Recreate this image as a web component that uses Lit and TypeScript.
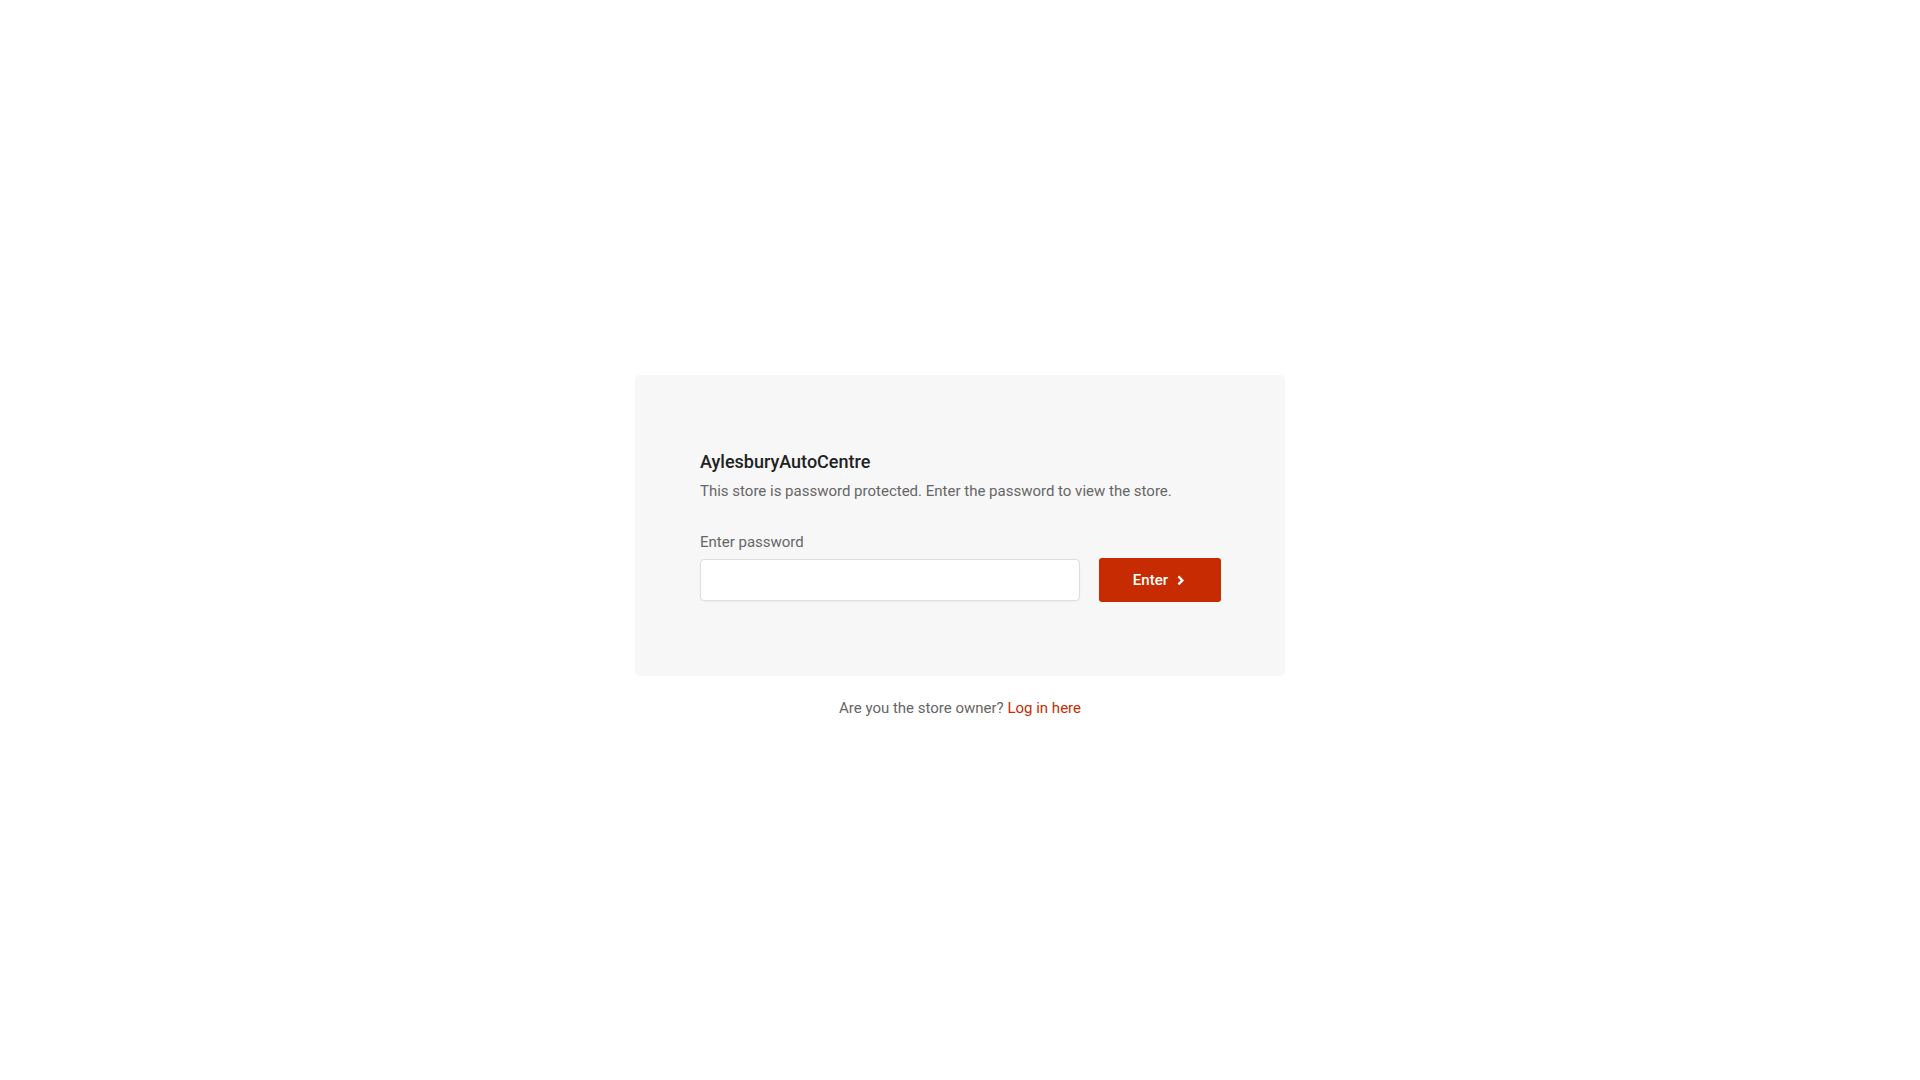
import { LitElement, html, css } from "lit";
import { customElement } from "lit/decorators.js";

@customElement("app-root")
export class AppRoot extends LitElement {
  static styles = css`
    :host {
      display: flex;
      flex-direction: column;
      align-items: center;
      justify-content: center;
      box-sizing: border-box;
      min-height: 100vh;
      padding: 14px 20px 0;
      background: #fff;
      color: #666;
      font-family: Roboto, "Liberation Sans", sans-serif;
      font-size: 15px;
      line-height: 24px;
    }
    .card {
      box-sizing: border-box;
      width: 100%;
      max-width: 650px;
      padding: 75px 64px 74px 65px;
      border-radius: 5px;
      background: #f7f7f7;
    }
    .title {
      margin: 0 0 5px;
      color: #222;
      font-size: 18px;
      font-weight: 500;
    }
    .message {
      margin: 0 0 27px;
    }
    .label {
      display: block;
      margin-bottom: 4px;
    }
    .row {
      display: flex;
      align-items: center;
      gap: 19px;
    }
    .field {
      flex: 1;
      min-width: 0;
      box-sizing: border-box;
      height: 42px;
      padding: 0 12px;
      border: 1px solid #ddd;
      border-radius: 4px;
      background: #fff;
      box-shadow: 0 1px 2px rgba(0, 0, 0, 0.03);
      color: #222;
      font: inherit;
    }
    .submit {
      display: flex;
      align-items: center;
      justify-content: center;
      gap: 9px;
      box-sizing: border-box;
      height: 44px;
      padding: 0 36px 0 34px;
      border: 0;
      border-radius: 3px;
      background: #c62b02;
      color: #fff;
      font: inherit;
      font-weight: 500;
      cursor: pointer;
    }
    .arrow {
      display: block;
      width: 8px;
      height: 10px;
    }
    .owner {
      margin: 20px 0 0;
    }
    .link {
      color: #c62b02;
      text-decoration: none;
    }
  `;

  render() {
    return html`
      <main class="card">
        <h1 class="title">AylesburyAutoCentre</h1>
        <p class="message">This store is password protected. Enter the password to view the store.</p>
        <form @submit=${(e: Event) => e.preventDefault()}>
          <label class="label" for="password">Enter password</label>
          <div class="row">
            <input class="field" id="password" type="password" autocomplete="current-password" />
            <button class="submit" type="submit">
              Enter
              <svg class="arrow" viewBox="0 0 8 10" fill="none" stroke="currentColor" stroke-width="2.3" aria-hidden="true">
                <path d="M1.4 1.4 5.4 5.4 1.4 9.4" />
              </svg>
            </button>
          </div>
        </form>
      </main>
      <p class="owner">Are you the store owner? <a class="link" href="/admin">Log in here</a></p>
    `;
  }
}
